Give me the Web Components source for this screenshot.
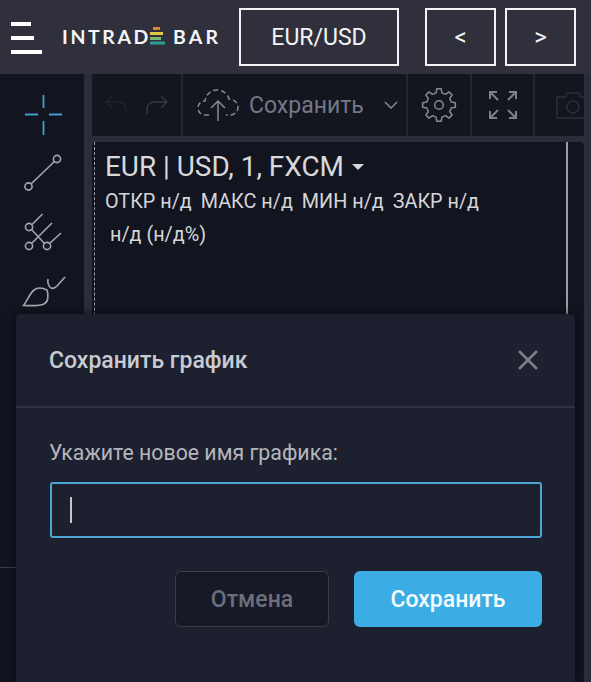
<!DOCTYPE html>
<html lang="ru"><head><meta charset="utf-8"><title>Intrade Bar</title>
<style>
html,body{margin:0;padding:0;width:591px;height:682px;overflow:hidden;background:#2e2f3b;font-family:Roboto,"Noto Sans",sans-serif}
app-shell{width:591px;height:682px}
</style></head><body>
<app-shell>
  <app-header slot="header"></app-header>
  <tool-rail slot="rail"></tool-rail>
  <chart-toolbar slot="toolbar"></chart-toolbar>
  <chart-pane slot="chart"></chart-pane>
  <save-dialog slot="dialog"></save-dialog>
</app-shell>
<script>
function def(name,html){
  customElements.define(name,class extends HTMLElement{
    constructor(){super();this.attachShadow({mode:'open'}).innerHTML=html;}
  });
}
function gear(cx,cy,ro,ri,n){
  let d='';
  const step=Math.PI*2/n;
  for(let k=0;k<n;k++){
    const a=k*step-Math.PI/2;
    const pts=[[ri,a-step*.30],[ro,a-step*.17],[ro,a+step*.17],[ri,a+step*.30]];
    pts.forEach((p,i)=>{
      const x=(cx+p[0]*Math.cos(p[1])).toFixed(2),y=(cy+p[0]*Math.sin(p[1])).toFixed(2);
      d+=(k===0&&i===0?'M':'L')+x+' '+y;
    });
  }
  return d+'Z';
}
def('app-shell',`<style>
:host{display:grid;grid-template-rows:74px minmax(0,1fr);grid-template-columns:84px minmax(0,1fr);position:relative;overflow:hidden;background:#2b2d3a}
.h{grid-column:1/3}
.main{display:flex;flex-direction:column;gap:6px;padding:0 7px 0 8px;min-height:0;min-width:0}
</style>
<div class="h"><slot name="header"></slot></div>
<slot name="rail"></slot>
<div class="main"><slot name="toolbar"></slot><slot name="chart"></slot></div>
<slot name="dialog"></slot>`);

def('app-header',`<style>
:host{display:flex;align-items:center;height:74px;background:#30303c;color:#fff;box-sizing:border-box;padding:0 15px 0 11px}
.burger{display:flex;flex-direction:column;gap:10px;width:31px;margin-top:1px}
.burger i{display:block;height:4px;background:#fff}
.burger i:nth-child(1){width:20px}.burger i:nth-child(2){width:23px}.burger i:nth-child(3){width:31px}
.logo{display:flex;align-items:center;margin-left:20px;width:157px;font:700 19.500px/20px Lato,Roboto,sans-serif;letter-spacing:2.600px;color:#f4f5f7;white-space:nowrap}
.logo svg{margin:-3px 8px 0 -2px;flex:none}
.logo .b{letter-spacing:3.200px}
.btn{display:flex;align-items:center;justify-content:center;box-sizing:border-box;height:58px;border:2px solid #f2f2f4;font:400 23px/1 Roboto,sans-serif;color:#f4f4f6}
.pair{width:160px;margin-left:20px}
.nav{width:71px;font-size:24px}
.n1{margin-left:26px}.n2{margin-left:9px;width:71px}
</style>
<div class="burger"><i></i><i></i><i></i></div>
<div class="logo"><span>INTRAD</span><svg width="16" height="18" viewBox="0 0 16 18"><rect x="4" y="0" width="7" height="3" fill="#d9853a"/><rect x="1" y="5" width="13" height="3" fill="#e0c846"/><rect x="1" y="10" width="11" height="3" fill="#74b96c"/><rect x="1" y="14.500" width="15" height="3" fill="#2f9c96"/></svg><span class="b">BAR</span></div>
<div class="btn pair">EUR/USD</div>
<div class="btn nav n1">&lt;</div>
<div class="btn nav n2">&gt;</div>`);

def('tool-rail',`<style>
:host{display:flex;flex-direction:column;background:#12151f;padding-top:12px;min-height:0;box-sizing:border-box}
svg{display:block;fill:none;stroke:#a3a6ae;stroke-width:1.600;width:84px;height:58px;flex:none}
.foot{margin-top:auto;height:114px;border-top:1px solid #3b3e4b}
</style>
<svg viewBox="0 86 84 58" style="stroke:#3f9fd2;stroke-width:1.800"><path d="M25 114.500H38M49 114.500H62M43.500 95V108M43.500 121V135"/></svg>
<svg viewBox="0 144 84 58"><circle cx="28.500" cy="186.500" r="3.600"/><circle cx="57" cy="159" r="3.600"/><path d="M31 184 54.500 161.500"/></svg>
<svg viewBox="0 202 84 58"><circle cx="29" cy="227" r="3.600"/><circle cx="29" cy="246" r="3.600"/><circle cx="47" cy="246" r="3.600"/><path d="M32 224.500 42.500 214M31.500 229.500 44.500 243.500M31.500 243.500 52 223M49.500 243.500 61 233"/></svg>
<svg viewBox="0 260 84 58"><path d="M23.500 305.500C27 301 30 293 34 290C38 287 43 288 47 290C49 296 48 302 44 304C39 306.500 30 305.500 23.500 305.500Z"/><path d="M48 279C47.500 282 48.500 286 51 288C53 289 55 288 57 286L65 277"/></svg>
<div class="foot"></div>`);

def('chart-toolbar',`<style>
:host{display:flex;gap:2px;height:62px;color:#8a8f9c;min-width:0;background:#23252f}
.g{background:#14161f;display:flex;align-items:center;justify-content:center;box-sizing:border-box}
svg{display:block;fill:none;stroke:#858995;stroke-width:1.500;flex:none}
.hist{width:89px;gap:17px}
.save{width:223px;padding:0 8px 0 14px;gap:10px;justify-content:flex-start}
.label{font:400 23px/1 Roboto,sans-serif;color:#737886}
.caret{margin-left:auto}
.set{width:62px}.full{width:61px}.cam{flex:1;min-width:0;overflow:hidden;justify-content:flex-start;padding-left:21px}
</style>
<div class="g hist">
<svg width="24" height="22" viewBox="0 0 24 22" style="stroke:#21242f"><path d="M8 2 2 8 8 14M2 8H15C19 8 22 11 22 15V20"/></svg>
<svg width="24" height="22" viewBox="0 0 24 22" style="stroke:#343742"><path d="M16 2 22 8 16 14M22 8H9C5 8 2 11 2 15V20"/></svg>
</div>
<div class="g save">
<svg width="42" height="34" viewBox="0 0 42 34"><path stroke-dasharray="5 3" d="M12 27H8C3 27 1 23 1 20C1 16 4 13 8 13C9 6 14 2 20 2C27 2 31 7 32 11C37 11 41 15 41 19C41 24 37 27 33 27H29"/><path d="M21 33V14M14 20 21 13 28 20"/></svg>
<span class="label">Сохранить</span>
<svg class="caret" width="14" height="8" viewBox="0 0 14 8"><path d="M1 1 7 7 13 1"/></svg>
</div>
<div class="g set"><svg width="36" height="36" viewBox="0 0 36 36"><circle cx="18" cy="18" r="4.300"/><path stroke-linejoin="round" d="${gear(18,18,16.500,12.500,8)}"/></svg></div>
<div class="g full"><svg width="30" height="30" viewBox="0 0 30 30" style="stroke-width:2;stroke:#7c808d"><path d="M2 9V2H9M2 2 10 10M28 9V2H21M28 2 20 10M2 21V28H9M2 28 10 20M28 21V28H21M28 28 20 20"/></svg></div>
<div class="g cam"><svg width="34" height="28" viewBox="0 0 34 28" style="stroke:#2b2e39"><path d="M1 6H9L11 2H23L25 6H33V27H1Z"/><circle cx="17" cy="16" r="6"/></svg></div>`);

def('chart-pane',`<style>
:host{display:flex;flex:1;min-height:0;background:#12151f;border-radius:4px 4px 0 0;padding-left:2px;padding-right:16px}
.plot{flex:1;min-width:0;border-left:1.500px dashed #9b9da6;border-right:2px solid #9a9ca4;padding:9px 0 0 10px;color:#d5d6da;font-family:Roboto,sans-serif;white-space:nowrap}
.t{display:flex;align-items:center;gap:8px;font-size:27.900px;line-height:32px;color:#d8d9dd}
.t i{display:block;width:0;height:0;border:6px solid transparent;border-top:6px solid #d8d9dd;border-bottom:0;margin-top:-1px}
.o{display:flex;font-size:19.800px;line-height:24px;margin-top:7px;gap:9px}
.c{font-size:19.800px;line-height:24px;margin:9px 0 0 5px}
</style>
<div class="plot">
<div class="t">EUR | USD, 1, FXCM<i></i></div>
<div class="o"><span>ОТКР н/д</span><span>МАКС н/д</span><span>МИН н/д</span><span>ЗАКР н/д</span></div>
<div class="c">н/д (н/д%)</div>
</div>`);

def('save-dialog',`<style>
:host{position:absolute;left:16px;right:16px;top:314px;bottom:0;background:#1d202e;border-radius:4px 4px 0 0;box-shadow:0 0 10px rgba(5,7,14,.75);display:flex;flex-direction:column;font-family:Roboto,sans-serif}
.head{display:flex;align-items:center;justify-content:space-between;height:94px;box-sizing:border-box;padding:0 36px 0 33px;border-bottom:2px solid #2f3240}
h2{margin:0;font:500 23px/1 Roboto,sans-serif;color:#c9cbd2}
.body{padding:33px 33px 0 34px;display:flex;flex-direction:column}
label{font:400 21.300px/24px Roboto,sans-serif;color:#b4b6bd;margin:0 0 17px -1px}
.input{box-sizing:border-box;height:56px;border:2px solid #4da6d6;border-radius:3px;display:flex;align-items:center;padding-left:18px}
.input i{display:block;width:2px;height:26px;background:#c5c7cf}
.act{display:flex;justify-content:flex-end;gap:25px;margin-top:33px}
button{height:56px;border-radius:6px;font:500 23px/1 Roboto,sans-serif;padding:0;box-sizing:border-box}
.no{width:154px;background:#171926;border:1.500px solid #3a3d4a;color:#6b6f7c}
.yes{width:188px;background:#3badE4;border:0;color:#f2fbff}
</style>
<div class="head"><h2>Сохранить график</h2>
<svg width="22" height="22" viewBox="0 0 22 22" fill="none" stroke="#7b7e88" stroke-width="2.600"><path d="M2 2 20 20M20 2 2 20"/></svg></div>
<div class="body"><label>Укажите новое имя графика:</label><div class="input"><i></i></div>
<div class="act"><button class="no">Отмена</button><button class="yes">Сохранить</button></div></div>`);
</script>
</body></html>
